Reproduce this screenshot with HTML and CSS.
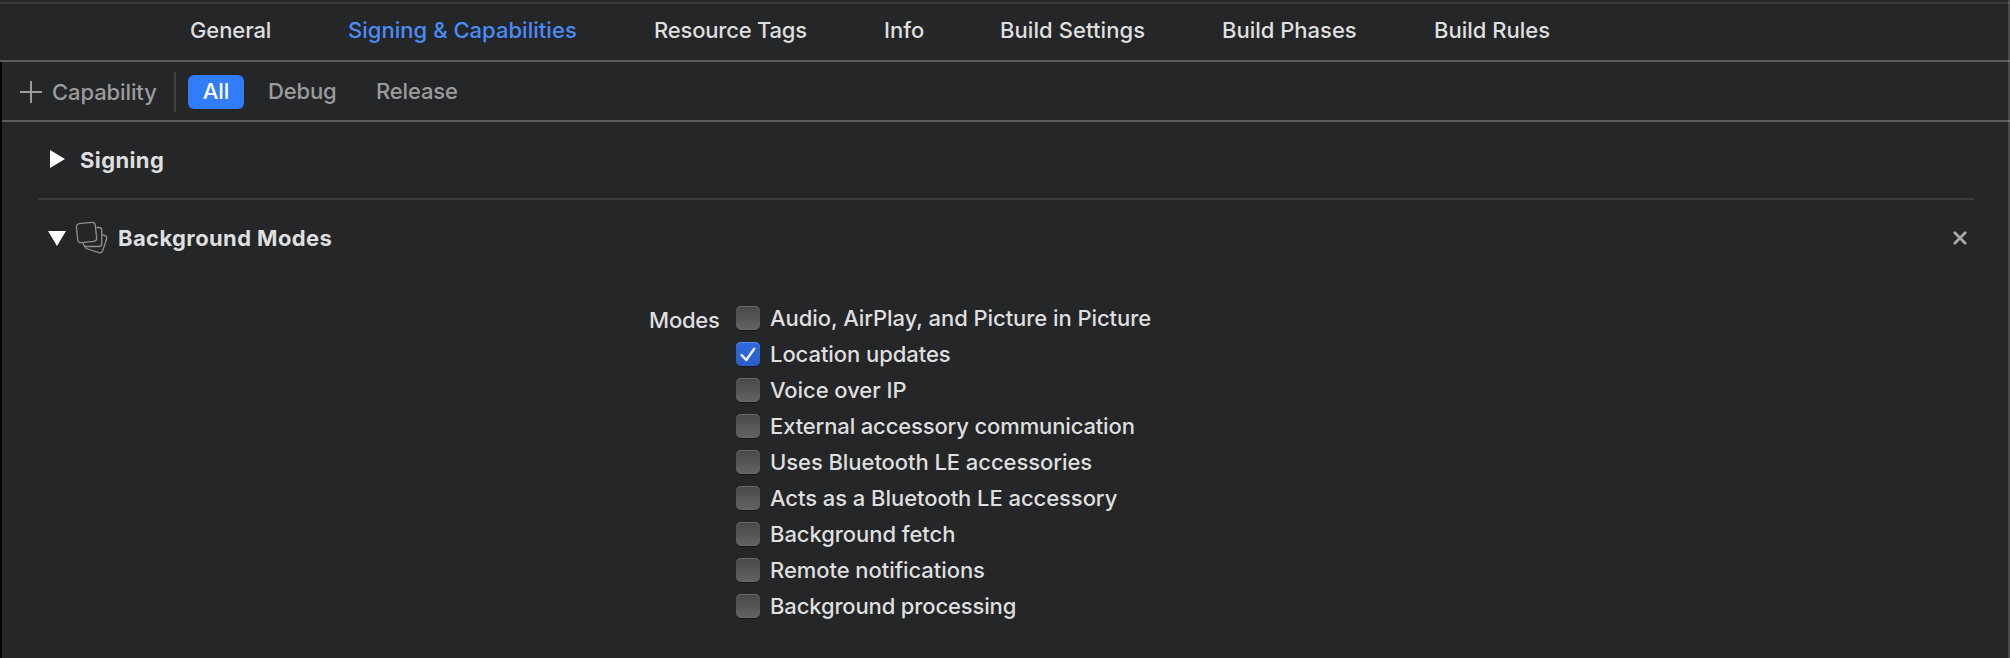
FILE: index.html
```html
<!DOCTYPE html>
<html lang="en">
<head>
<meta charset="utf-8">
<title>Signing &amp; Capabilities</title>
<link rel="stylesheet" href="styles.css">
</head>
<body>
<div class="editor">
  <nav class="tabs">
    <span class="tab tab-general">General</span>
    <span class="tab tab-signing active">Signing &amp; Capabilities</span>
    <span class="tab tab-resources">Resource Tags</span>
    <span class="tab tab-info">Info</span>
    <span class="tab tab-settings">Build Settings</span>
    <span class="tab tab-phases">Build Phases</span>
    <span class="tab tab-rules">Build Rules</span>
  </nav>
  <div class="pane">
    <div class="toolbar">
      <svg class="plus" width="22" height="22" viewBox="0 0 22 22"><path d="M11 0V22M0 11H22" stroke="#9b9c9d" stroke-width="2"/></svg>
      <span class="add">Capability</span>
      <span class="divider"></span>
      <span class="pill">All</span>
      <span class="scope scope-debug">Debug</span>
      <span class="scope scope-release">Release</span>
    </div>
    <div class="content">
      <section class="row signing">
        <svg class="arrow-right" width="15" height="18" viewBox="0 0 15 18"><path d="M0 0L15 9L0 18Z" fill="#fff"/></svg>
        <h2 class="title">Signing</h2>
      </section>
      <section class="row modes-head">
        <svg class="arrow-down" width="18" height="15" viewBox="0 0 18 15"><path d="M0 0H18L9 15Z" fill="#fff"/></svg>
        <svg class="stack" width="34" height="34" viewBox="0 0 34 34" fill="none" stroke="#8f9091" stroke-width="1.3">
          <rect x="2" y="2" width="19" height="19" rx="3.2" transform="rotate(-6 11.5 11.5)"/>
          <path d="M21.5 6.5H24Q26.800 6.500 26.800 9.500V22.500Q26.800 25.500 23.800 25.500H11.500Q8.500 25.500 8 21.500"/>
          <path d="M27 13.500L30 14.700Q32.300 15.700 31.600 18L27.600 30Q26.700 32.500 24 31.700L12.500 28Q9.700 27 9.300 24.500"/>
        </svg>
        <h2 class="title">Background Modes</h2>
        <svg class="close" width="14" height="14" viewBox="0 0 14 14"><path d="M1.800 1.800L12.200 12.200M12.200 1.800L1.800 12.200" stroke="#a9aaab" stroke-width="2.700" stroke-linecap="round"/></svg>
      </section>
      <section class="modes">
        <span class="modes-label">Modes</span>
        <div class="options">
          <div class="option"><span class="box"></span><span class="name">Audio, AirPlay, and Picture in Picture</span></div>
          <div class="option"><span class="box checked"><svg width="24" height="24" viewBox="0 0 24 24"><path d="M5.700 13.200L10.300 18L18.200 6.700" fill="none" stroke="#e9eefa" stroke-width="2.500" stroke-linecap="round" stroke-linejoin="round"/></svg></span><span class="name">Location updates</span></div>
          <div class="option"><span class="box"></span><span class="name">Voice over IP</span></div>
          <div class="option"><span class="box"></span><span class="name tight">External accessory communication</span></div>
          <div class="option"><span class="box"></span><span class="name">Uses Bluetooth LE accessories</span></div>
          <div class="option"><span class="box"></span><span class="name">Acts as a Bluetooth LE accessory</span></div>
          <div class="option"><span class="box"></span><span class="name">Background fetch</span></div>
          <div class="option"><span class="box"></span><span class="name">Remote notifications</span></div>
          <div class="option"><span class="box"></span><span class="name tight">Background processing</span></div>
        </div>
      </section>
    </div>
  </div>
  <div class="edge"></div>
</div>
</body>
</html>
```
FILE: styles.css
```css
* { box-sizing: border-box; }
body {
  margin: 0;
  background: #252628;
  color: #dfdfdf;
  font: 450 22px/28px Inter, "Liberation Sans", sans-serif;
  white-space: nowrap;
}
.editor {
  display: flex;
  flex-direction: column;
  position: relative;
  height: 658px;
  overflow: hidden;
  padding-top: 2px;
}
/* scroller edge running over the full height of the editor */
.edge {
  position: absolute;
  top: 0;
  right: 0;
  bottom: 0;
  width: 2px;
  background: rgba(255, 255, 255, 0.17);
}
.tabs {
  display: flex;
  height: 60px;
  padding: 12px 0 0 190px;
  border-top: 2px solid #3a3b3d;
  border-bottom: 2px solid #5b5d5f;
  font-weight: 500;
}
.tab { flex: none; }
.tab-general { width: 158px; letter-spacing: -0.1px; }
.tab-signing { width: 306px; letter-spacing: 0.03px; }
.tab-resources { width: 230px; letter-spacing: -0.2px; }
.tab-info { width: 116px; }
.tab-settings { width: 222px; letter-spacing: 0.08px; }
.tab-phases { width: 212px; }
.active { color: #4a8cf7; font-weight: 450; }
.pane { flex: 1; border-left: 2px solid #000; }
.toolbar {
  display: flex;
  align-items: center;
  height: 60px;
  padding: 2px 0 0 18px;
  border-bottom: 2px solid #5b5d5f;
  color: #9b9c9d;
}
.plus { margin-right: 10px; }
.add { width: 122px; letter-spacing: -0.1px; }
.divider { width: 2px; height: 40px; background: #3f4042; }
.pill {
  width: 56px;
  height: 34px;
  margin-left: 12px;
  border-radius: 6px;
  background: #317cf8;
  color: #fff;
  font-weight: 500;
  line-height: 32px;
  text-align: center;
}
.scope { width: 108px; padding-bottom: 2px; letter-spacing: -0.15px; }
.scope-debug { margin-left: 24px; }
.content { padding: 0 36px; }
.row { display: flex; align-items: center; }
.signing { height: 78px; border-bottom: 2px solid #3a3b3d; padding: 0 0 2px 12px; }
.title { margin: 0; font-size: 22px; font-weight: 700; line-height: 28px; letter-spacing: 0.38px; }
.signing .title { margin-left: 15px; padding-top: 1px; }
.modes-head { height: 76px; padding: 0 7px 0 10px; }
.stack { margin-left: 9px; }
.modes-head .title { margin-left: 9px; }
.close { margin-left: auto; }
.modes { display: flex; padding: 24px 0 0 611px; }
.modes-label { width: 87px; padding-top: 6px; letter-spacing: -0.2px; }
.options { display: flex; flex-direction: column; }
.option { display: flex; align-items: center; height: 36px; }
.name { letter-spacing: -0.06px; }
.name.tight { letter-spacing: -0.14px; }
.box {
  width: 24px;
  height: 24px;
  margin-right: 10px;
  border-radius: 5px;
  background: linear-gradient(#47484a, #636466);
  box-shadow: inset 0 1px 0 #69696b, 0 1px 1px #1b1b1d;
}
.checked { background: linear-gradient(#2f6be0, #295ec6); box-shadow: inset 0 1px 0 #5686e4, 0 1px 1px #1b1b1d; }
.box svg { display: block; }
```
